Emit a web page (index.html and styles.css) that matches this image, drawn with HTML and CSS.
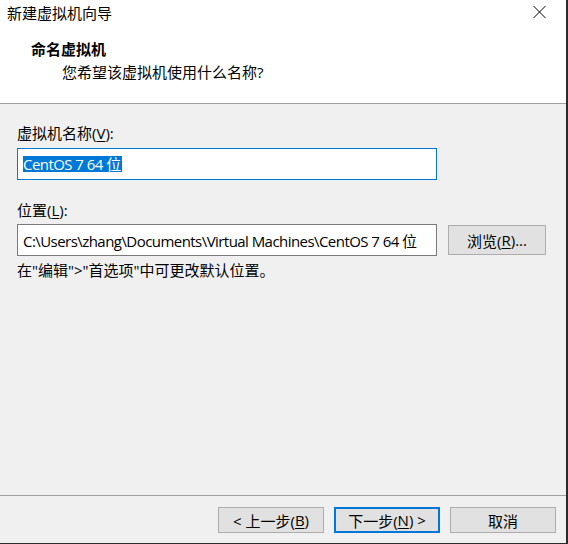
FILE: index.html
```html
<!DOCTYPE html>
<html lang="zh-CN">
<head>
<meta charset="utf-8">
<title>新建虚拟机向导</title>
<link rel="stylesheet" href="styles.css">
</head>
<body>
<div class="window">
  <div class="top">
    <div class="titlebar">
      <span class="title">新建虚拟机向导</span>
      <span class="close">
        <svg width="15" height="14" viewBox="0 0 15 14"><path d="M1.5 1 L13.5 13 M13.5 1 L1.5 13" stroke="#000" stroke-width="1" fill="none"/></svg>
      </span>
    </div>
    <div class="header">
      <div class="heading">命名虚拟机</div>
      <div class="subtitle">您希望该虚拟机使用什么名称?</div>
    </div>
  </div>
  <div class="content">
    <div class="label label-name">虚拟机名称(<u>V</u>):</div>
    <div class="field field-focused"><span class="selected">CentOS 7 64 位</span></div>
    <div class="label label-loc">位置(<u>L</u>):</div>
    <div class="row">
      <div class="field field-path">C:\Users\zhang\Documents\Virtual Machines\CentOS 7 64 位</div>
      <div class="btn btn-browse">浏览(<u>R</u>)...</div>
    </div>
    <div class="hint">在"编辑"&gt;"首选项"中可更改默认位置。</div>
  </div>
  <div class="footer">
    <div class="btn btn-footer">&lt; 上一步(<u>B</u>)</div>
    <div class="btn btn-footer btn-default">下一步(<u>N</u>) &gt;</div>
    <div class="btn btn-footer">取消</div>
  </div>
</div>
</body>
</html>
```

FILE: styles.css
```css
* { box-sizing: border-box; }

html, body {
  margin: 0;
  padding: 0;
  background: #f0f0f0;
}

body {
  font-family: "Open Sans", "Noto Sans CJK SC", sans-serif;
  font-size: 15px;
  color: #000;
}

.window {
  width: 568px;
  height: 544px;
  display: flex;
  flex-direction: column;
  background: #f0f0f0;
  border-right: 2px solid #2b2b2b;
  border-bottom: 1px solid #2b2b2b;
}

.top {
  background: #fff;
  height: 104px;
  border-bottom: 1px solid #a0a0a0;
}

.titlebar {
  height: 28px;
  display: flex;
  justify-content: space-between;
  padding: 3px 0 0 7px;
}

.title {
  font-family: "Noto Sans CJK SC", sans-serif;
  line-height: 20px;
}

.close {
  width: 46px;
  height: 24px;
  margin-top: -3px;
  display: flex;
  align-items: center;
  justify-content: center;
  padding-right: 8px;
}

.close svg { display: block; }

.header {
  padding-top: 11px;
}

.heading {
  font-family: "Noto Sans CJK SC", sans-serif;
  font-weight: bold;
  line-height: 20px;
  padding-left: 31px;
}

.subtitle {
  line-height: 20px;
  margin-top: 3px;
  padding-left: 62px;
}

.content {
  flex: 1;
  padding: 0 0 0 17px;
}

.label {
  line-height: 20px;
}

.label-name { margin-top: 19px; }
.label-loc { margin-top: 20px; }

u { text-decoration-thickness: 1px; text-underline-offset: 2px; }

.field {
  width: 420px;
  height: 32px;
  background: #fff;
  border: 1px solid #7a7a7a;
  display: flex;
  align-items: center;
  padding-left: 5px;
  white-space: nowrap;
  overflow: hidden;
  letter-spacing: -0.55px;
}

.field-focused {
  margin-top: 5px;
  border-color: #0078d7;
}

.selected {
  background: #0078d7;
  color: #fff;
  line-height: 16px;
  padding: 0 1px 0 0;
}

.row {
  display: flex;
  align-items: flex-start;
  gap: 11px;
  margin-top: 4px;
}

.btn {
  background: #e1e1e1;
  border: 1px solid #adadad;
  display: flex;
  align-items: center;
  justify-content: center;
  white-space: nowrap;
}

.btn-browse {
  width: 98px;
  height: 30px;
  margin-top: 1px;
}

.hint {
  line-height: 20px;
  margin-top: 4px;
}

.footer {
  border-top: 1px solid #a0a0a0;
  display: flex;
  justify-content: flex-end;
  gap: 10px;
  padding: 11px 10px 10px 0;
}

.btn-footer {
  width: 106px;
  height: 26px;
}

.btn-default {
  border: 2px solid #0078d7;
}
```
